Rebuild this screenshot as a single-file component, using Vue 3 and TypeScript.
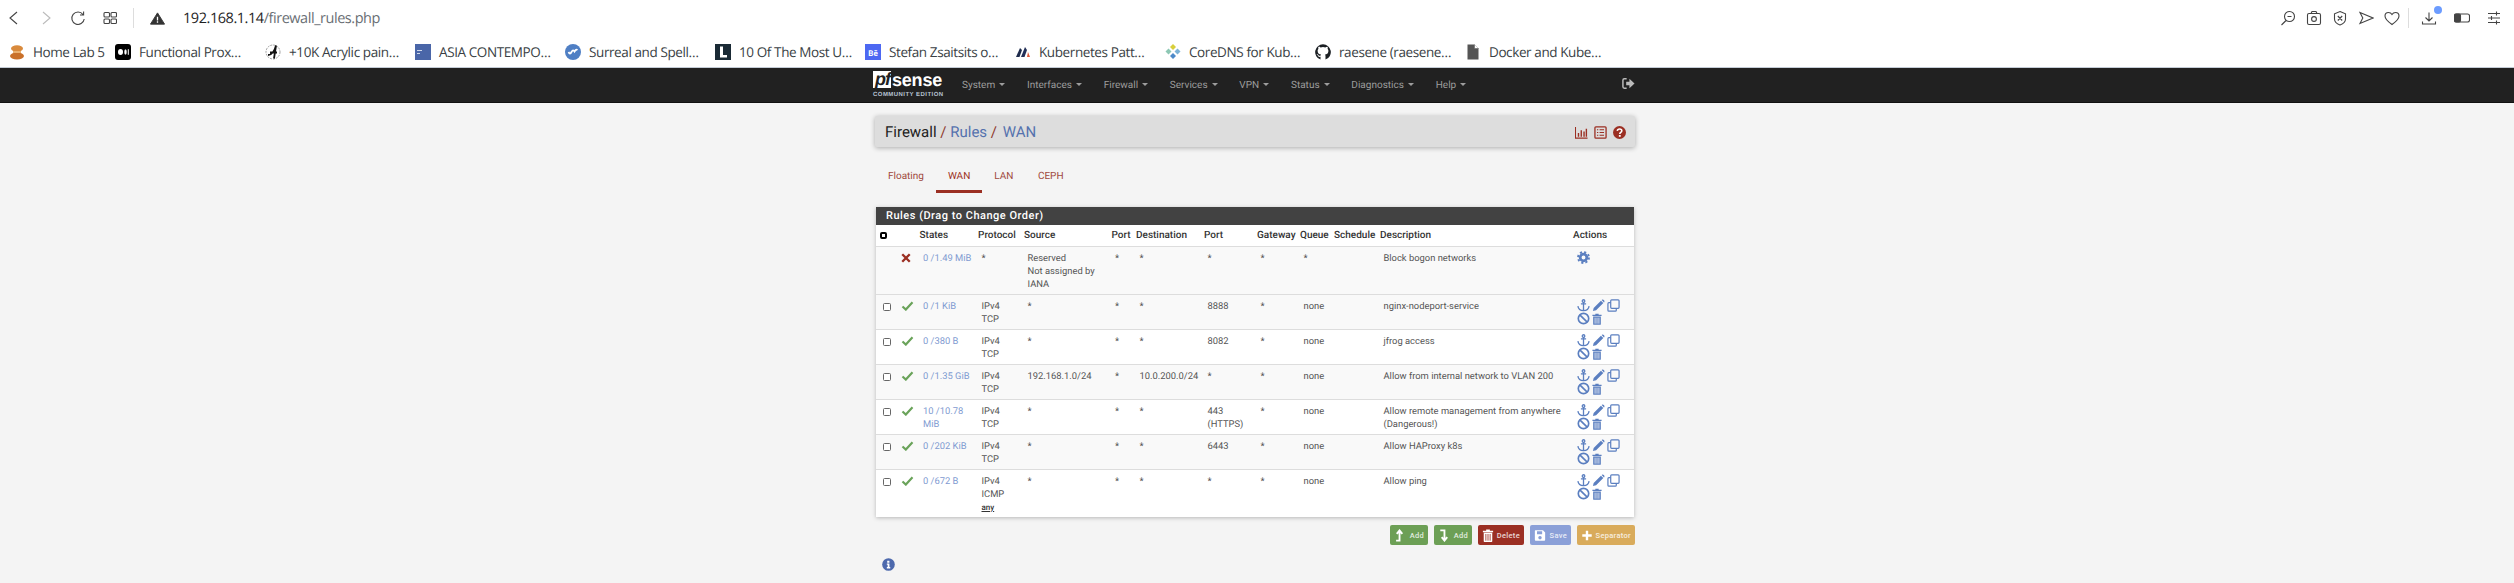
<template>
  <div class="page">
    <svg class="sprites" aria-hidden="true">
      <symbol id="i-check" viewBox="0 0 14 12">
        <path d="M1 6.5 L5 10.3 L13 1.6" fill="none" stroke="currentColor" stroke-width="2.6" />
      </symbol>
      <symbol id="i-times" viewBox="0 0 12 12">
        <path d="M1.5 1.5 L10.5 10.5 M10.5 1.5 L1.5 10.5" fill="none" stroke="currentColor" stroke-width="2.8" />
      </symbol>
      <symbol id="i-gear" viewBox="0 0 14 14">
        <circle cx="7" cy="7" r="3.6" fill="none" stroke="currentColor" stroke-width="3" />
        <circle cx="7" cy="7" r="5.9" fill="none" stroke="currentColor" stroke-width="2" stroke-dasharray="2.3 2.33" />
      </symbol>
      <symbol id="i-anchor" viewBox="0 0 14 14">
        <g fill="none" stroke="currentColor" stroke-width="1.4">
          <circle cx="7" cy="2.2" r="1.4" />
          <path d="M7 3.6 V12.6 M4.2 5.3 H9.8 M1 7.6 C1.4 10.8 4 12.4 7 12.6 C10 12.4 12.6 10.8 13 7.6" />
        </g>
      </symbol>
      <symbol id="i-pencil" viewBox="0 0 14 14">
        <path d="M1 13 L1.8 9.6 L9.6 1.8 L12.2 4.4 L4.4 12.2 Z M10.4 1 L11.2 0.6 Q12.2 0.5 13.2 1.6 Q13.7 2.4 13.2 3.4 L12.9 3.7 Z" fill="currentColor" />
      </symbol>
      <symbol id="i-copy" viewBox="0 0 14 14">
        <g fill="none" stroke="currentColor" stroke-width="1.3">
          <rect x="4" y="1" width="9" height="9" rx="1" />
          <path d="M4 4 H2 Q1 4 1 5 V12 Q1 13 2 13 H9 Q10 13 10 12 V10" />
        </g>
      </symbol>
      <symbol id="i-ban" viewBox="0 0 14 14">
        <g fill="none" stroke="currentColor" stroke-width="1.8">
          <circle cx="7" cy="7" r="5.6" />
          <path d="M3 3 L11 11" />
        </g>
      </symbol>
      <symbol id="i-trash" viewBox="0 0 12 14">
        <path d="M0.5 2 H4 V0.6 H8 V2 H11.5 V3.4 H0.5 Z M1.4 4 H10.6 V13.2 Q10.6 14 9.8 14 H2.2 Q1.4 14 1.4 13.2 Z" fill="currentColor" />
        <path d="M3.7 5.4 V12.6 M6 5.4 V12.6 M8.3 5.4 V12.6" style="stroke: var(--slit, #fff)" stroke-width="0.9" />
      </symbol>
      <symbol id="i-save" viewBox="0 0 14 14">
        <path fill-rule="evenodd" d="M1.5 1 H10.5 L13 3.5 V12 Q13 13 12 13 H2 Q1 13 1 12 V1.5 Z M3.5 2 V5.5 H9.5 V2 Z M7 7.5 A2 2 0 1 0 7.01 7.5 Z" fill="currentColor" />
      </symbol>
      <symbol id="i-plus" viewBox="0 0 14 14">
        <path d="M7 1.5 V12.5 M1.5 7 H12.5" stroke="currentColor" stroke-width="2.8" />
      </symbol>
      <symbol id="i-up" viewBox="0 0 10 14">
        <path d="M4.5 13.5 V2.5 M1.5 5.2 L4.5 1.5 L7.5 5.2 M4.5 12.5 H0.8" fill="none" stroke="currentColor" stroke-width="2" />
      </symbol>
      <symbol id="i-down" viewBox="0 0 10 14">
        <path d="M5.5 0.5 V11.5 M2.5 8.8 L5.5 12.5 L8.5 8.8 M5.5 1.5 H1" fill="none" stroke="currentColor" stroke-width="2" />
      </symbol>
    </svg>

    <header class="browser">
      <div class="toolbar">
        <div class="tool-left">
          <svg class="tb-icon" viewBox="0 0 16 16"><path d="M12 2 L5 8 L12 14" /></svg>
          <svg class="tb-icon faded" viewBox="0 0 16 16"><path d="M6 2 L13 8 L6 14" /></svg>
          <svg class="tb-icon" viewBox="0 0 16 16"><path d="M14 4.5 A6.2 6.2 0 1 0 15.2 9 M14.6 1.4 V5 H11" /></svg>
          <svg class="tb-icon" viewBox="0 0 16 16">
            <rect x="3" y="2.5" width="5.5" height="4.5" rx="1" /><rect x="10" y="2.5" width="5.5" height="4.5" rx="1" />
            <rect x="3" y="9" width="5.5" height="4.5" rx="1" /><rect x="10" y="9" width="5.5" height="4.5" rx="1" />
          </svg>
          <span class="tb-sep"></span>
          <svg class="warn" viewBox="0 0 16 16">
            <path d="M8 2 L15.5 14 H0.5 Z" fill="#333" stroke="#333" stroke-linejoin="round" />
            <path d="M8 6 V10 M8 11 V12.5" stroke="#fff" stroke-width="1.4" />
          </svg>
          <span class="url"><b>192.168.1.14</b>/firewall_rules.php</span>
        </div>
        <div class="tool-right">
          <svg class="tb-icon" viewBox="0 0 16 16"><circle cx="9.5" cy="6.5" r="5" /><path d="M7.5 6.5 H11.5 M6 10.5 L1.5 15" /></svg>
          <svg class="tb-icon" viewBox="0 0 16 16"><rect x="1.5" y="3.5" width="13" height="11" rx="1.5" /><path d="M5 3.5 L6 1.5 H10 L11 3.5" /><circle cx="8" cy="9" r="2.4" /></svg>
          <svg class="tb-icon" viewBox="0 0 16 16"><path d="M8 1.5 L13.5 3.8 V9 Q13.5 13 8 15 Q2.5 13 2.5 9 V3.8 Z M5.8 6 L10.2 10.5 M10.2 6 L5.8 10.5" /></svg>
          <svg class="tb-icon" viewBox="0 0 16 16"><path d="M2 2.5 L15 8 L2 13.5 L4.8 8 Z" /></svg>
          <svg class="tb-icon" viewBox="0 0 16 16"><path d="M8 14.5 C3 11 1 8.8 1 6 C1 3.8 2.6 2.5 4.5 2.5 C6 2.5 7.3 3.3 8 4.5 C8.7 3.3 10 2.5 11.5 2.5 C13.4 2.5 15 3.8 15 6 C15 8.8 13 11 8 14.5 Z" /></svg>
          <span class="tb-sep right"></span>
          <span class="dl">
            <svg class="tb-icon" viewBox="0 0 16 16"><path d="M8 2.5 V11 M4.5 7.5 L8 11 L11.5 7.5 M1.5 11.5 V14 H14.5 V11.5" /></svg>
            <i class="dot"></i>
          </span>
          <svg class="tb-icon side" viewBox="0 0 16 16"><rect x="0.5" y="4" width="15" height="8" rx="2" /><rect x="0.5" y="4" width="6" height="8" rx="1.5" fill="#444" /></svg>
          <svg class="tb-icon" viewBox="0 0 16 16"><path d="M2 3.5 H14 M2 8 H14 M2 12.5 H14 M10.5 1.5 V5.5 M5.5 6 V10 M10.5 10.5 V14.5" /></svg>
        </div>
      </div>
      <div class="bookmarks">
        <div v-for="b in bookmarks" :key="b.label" class="bookmark" :class="{ first: b.icon === 'homelab' }">
          <svg class="fav" viewBox="0 0 16 16">
            <g v-if="b.icon === 'homelab'">
              <ellipse cx="8" cy="4.5" rx="6" ry="3.2" fill="#d98a3d" />
              <ellipse cx="8" cy="12" rx="7" ry="3.5" fill="#c9702a" />
              <rect x="4" y="7" width="8" height="2" fill="#e9b070" />
            </g>
            <g v-else-if="b.icon === 'medium'">
              <rect width="16" height="16" rx="3" fill="#000" />
              <ellipse cx="5.5" cy="8" rx="2.5" ry="3" fill="#fff" /><ellipse cx="10.5" cy="8" rx="1.2" ry="2.8" fill="#fff" /><rect x="12.8" y="5.2" width="1" height="5.6" fill="#fff" />
            </g>
            <g v-else-if="b.icon === 'acrylic'">
              <circle cx="8" cy="8" r="7" fill="#fff" stroke="#777" stroke-width="0.7" stroke-dasharray="2 1" />
              <path d="M3 11 C7 11 10 6 11 1.5 L9 14.5 M5 8.5 H12" fill="none" stroke="#111" stroke-width="1.8" />
            </g>
            <g v-else-if="b.icon === 'asia'">
              <rect width="16" height="16" fill="#4a66a8" />
              <rect x="2" y="6" width="5" height="1" fill="#cfd8ea" /><rect x="2" y="9" width="3" height="1" fill="#cfd8ea" />
            </g>
            <g v-else-if="b.icon === 'surreal'">
              <circle cx="8" cy="8" r="8" fill="#4f7fc4" />
              <path d="M3.5 8 Q5 11 6.5 8 T9.5 7.5 Q11 5 12.5 6" fill="none" stroke="#fff" stroke-width="1.8" />
            </g>
            <g v-else-if="b.icon === 'ten'">
              <rect width="16" height="16" fill="#1a2a35" />
              <path d="M5 2.5 H8 V11 H12 V13.5 H5 Z" fill="#fff" />
            </g>
            <g v-else-if="b.icon === 'behance'">
              <rect width="16" height="16" fill="#4d68f2" />
              <text x="8" y="11.5" class="be" text-anchor="middle">Bē</text>
            </g>
            <g v-else-if="b.icon === 'k8s'">
              <path d="M1 13 L5 4 L7 6 L4.5 13 Z" fill="#1f2c4d" />
              <path d="M6 13 L10 3 L12 6 L9.5 13 Z" fill="#232f58" />
              <path d="M12 13 L13 8 L15 13 Z" fill="#e0583a" />
            </g>
            <g v-else-if="b.icon === 'coredns'">
              <path d="M8 0 L11 3 L8 6 L5 3 Z" fill="#d8cf3c" />
              <path d="M3.5 4.5 L6.5 7.5 L3.5 10.5 L0.5 7.5 Z" fill="#8dc7b4" />
              <path d="M12.5 4.5 L15.5 7.5 L12.5 10.5 L9.5 7.5 Z" fill="#7bb2d6" />
              <path d="M8 9 L11 12 L8 15 L5 12 Z" fill="#4d8ac9" />
            </g>
            <g v-else-if="b.icon === 'github'">
              <path d="M8 0.3 A7.8 7.8 0 0 0 5.5 15.5 V12.8 C3.3 13.3 2.9 11.8 2.9 11.8 C2.5 10.8 2 10.6 2 10.6 C1.3 10.1 2.1 10.1 2.1 10.1 C2.9 10.2 3.3 10.9 3.3 10.9 C4 12.1 5.1 11.8 5.6 11.6 C5.7 11 5.9 10.7 6.1 10.5 C4.4 10.3 2.6 9.6 2.6 6.7 C2.6 5.9 2.9 5.2 3.4 4.7 C3.3 4.5 3 3.7 3.5 2.7 C3.5 2.7 4.2 2.5 5.6 3.4 A7.6 7.6 0 0 1 10.4 3.4 C11.8 2.5 12.5 2.7 12.5 2.7 C13 3.7 12.7 4.5 12.6 4.7 C13.1 5.2 13.4 5.9 13.4 6.7 C13.4 9.6 11.6 10.3 9.9 10.5 C10.2 10.8 10.5 11.3 10.5 12 V15.5 A7.8 7.8 0 0 0 8 0.3 Z" fill="#1b1f23" />
            </g>
            <g v-else>
              <path d="M2.5 0.5 H9.5 L13.5 4.5 V15.5 H2.5 Z" fill="#555" />
              <path d="M9.5 0.5 V4.5 H13.5" fill="#fff" stroke="#555" stroke-width="0.5" />
            </g>
          </svg>
          <span class="bm-label">{{ b.label }}</span>
        </div>
      </div>
    </header>

    <nav class="topnav">
      <div class="logo">
        <div class="logo-top"><span class="logo-pf">pf</span><span class="logo-sense">sense</span></div>
        <div class="logo-sub">COMMUNITY EDITION</div>
      </div>
      <ul class="menu">
        <li v-for="m in menus" :key="m">{{ m }}<i class="caret"></i></li>
      </ul>
      <svg class="logout" viewBox="0 0 14 14">
        <path d="M5 2 H2.5 Q1 2 1 3.5 V10.5 Q1 12 2.5 12 H5" fill="none" stroke="currentColor" stroke-width="1.6" />
        <path d="M4.5 5 H8 V1.8 L13.5 7 L8 12.2 V9 H4.5 Z" fill="currentColor" />
      </svg>
    </nav>

    <main class="content">
      <div class="crumbs">
        <h1>Firewall <em>/</em> <a>Rules</a> <em class="wide">/</em> <a>WAN</a></h1>
        <div class="crumb-icons">
          <svg viewBox="0 0 14 14"><path d="M0.5 1 V13 H13.5" fill="none" stroke="currentColor" stroke-width="1.2" /><path d="M3 7.5 H4.5 V11.5 H3 Z M6 4.5 H7.5 V11.5 H6 Z M9 6 H10.5 V11.5 H9 Z M11.5 3 H13 V11.5 H11.5 Z" fill="currentColor" /></svg>
          <svg viewBox="0 0 14 14"><rect x="1" y="1" width="12" height="12" rx="1" fill="none" stroke="currentColor" stroke-width="1.4" /><path d="M3.2 4 H4.6 M6 4 H10.8 M3.2 7 H4.6 M6 7 H10.8 M3.2 10 H4.6 M6 10 H10.8" stroke="currentColor" stroke-width="1.2" /></svg>
          <svg viewBox="0 0 14 14"><circle cx="7" cy="7" r="7" fill="currentColor" /><path d="M4.6 5.3 C4.8 3.8 5.8 3.2 7.1 3.2 C8.5 3.2 9.5 4 9.5 5.2 C9.5 6.9 7.3 6.9 7.3 8.6" fill="none" stroke="#fff" stroke-width="1.7" /><rect x="6.3" y="9.7" width="2" height="1.9" fill="#fff" /></svg>
        </div>
      </div>

      <ul class="tabs">
        <li v-for="t in tabs" :key="t" :class="{ active: t === 'WAN' }">{{ t }}</li>
      </ul>

      <section class="panel">
        <h2>Rules (Drag to Change Order)</h2>
        <table>
          <colgroup>
            <col v-for="(w, i) in colWidths" :key="i" :style="{ width: w + 'px' }" />
          </colgroup>
          <thead>
            <tr>
              <th><span class="head-check"></span></th>
              <th></th>
              <th>States</th>
              <th>Protocol</th>
              <th>Source</th>
              <th>Port</th>
              <th>Destination</th>
              <th>Port</th>
              <th>Gateway</th>
              <th>Queue</th>
              <th>Schedule</th>
              <th>Description</th>
              <th>Actions</th>
            </tr>
          </thead>
          <tbody>
            <tr v-for="r in rules" :key="r.desc" :class="{ shaded: r.shaded }">
              <td><span v-if="!r.blocked" class="check"></span></td>
              <td class="status">
                <svg v-if="r.blocked" class="st-x"><use href="#i-times" /></svg>
                <svg v-else class="st-ok"><use href="#i-check" /></svg>
              </td>
              <td class="link">{{ r.states }}</td>
              <td>
                <template v-for="(p, i) in r.proto" :key="p">
                  <br v-if="i" />{{ p }}
                </template>
                <template v-if="r.any"><abbr class="any">any</abbr></template>
              </td>
              <td>
                <template v-for="(s, i) in r.source" :key="s">
                  <br v-if="i" />{{ s }}
                </template>
              </td>
              <td>*</td>
              <td>{{ r.dest }}</td>
              <td>{{ r.port }}</td>
              <td>*</td>
              <td>{{ r.queue }}</td>
              <td></td>
              <td>{{ r.desc }}</td>
              <td class="actions">
                <svg v-if="r.blocked" class="gear"><use href="#i-gear" /></svg>
                <template v-else>
                  <div class="act-row">
                    <svg class="a-anchor"><use href="#i-anchor" /></svg>
                    <svg class="a-pencil"><use href="#i-pencil" /></svg>
                    <svg class="a-copy"><use href="#i-copy" /></svg>
                  </div>
                  <div class="act-row">
                    <svg class="a-ban"><use href="#i-ban" /></svg>
                    <svg class="a-trash"><use href="#i-trash" /></svg>
                  </div>
                </template>
              </td>
            </tr>
          </tbody>
        </table>
      </section>

      <div class="buttons">
        <button v-for="b in buttons" :key="b.icon" :class="b.cls">
          <svg :class="'btn-' + b.icon"><use :href="'#i-' + b.icon" /></svg>
          <span>{{ b.label }}</span>
        </button>
      </div>

      <svg class="info" viewBox="0 0 14 14">
        <circle cx="7" cy="7" r="6.8" fill="#4d69ad" />
        <path d="M5.6 3 H8 V5 H5.6 Z M5.2 6 H8 V9.8 H8.9 V11.2 H5.2 V9.8 H6.1 V7.4 H5.2 Z" fill="#fff" />
      </svg>
    </main>
  </div>
</template>

<script setup lang="ts">
interface Rule {
  blocked?: boolean
  shaded?: boolean
  any?: boolean
  states: string
  proto: string[]
  source: string[]
  dest: string
  port: string
  queue: string
  desc: string
}

const bookmarks = [
  { icon: 'homelab', label: 'Home Lab 5' },
  { icon: 'medium', label: 'Functional Prox…' },
  { icon: 'acrylic', label: '+10K Acrylic pain…' },
  { icon: 'asia', label: 'ASIA CONTEMPO…' },
  { icon: 'surreal', label: 'Surreal and Spell…' },
  { icon: 'ten', label: '10 Of The Most U…' },
  { icon: 'behance', label: 'Stefan Zsaitsits o…' },
  { icon: 'k8s', label: 'Kubernetes Patt…' },
  { icon: 'coredns', label: 'CoreDNS for Kub…' },
  { icon: 'github', label: 'raesene (raesene…' },
  { icon: 'doc', label: 'Docker and Kube…' },
]

const menus = ['System', 'Interfaces', 'Firewall', 'Services', 'VPN', 'Status', 'Diagnostics', 'Help']
const tabs = ['Floating', 'WAN', 'LAN', 'CEPH']
const colWidths = [20, 20, 58.5, 46, 87.5, 24.5, 68, 53, 43, 34, 46, 193, 64.5]

const v4tcp = ['IPv4', 'TCP']

const rules: Rule[] = [
  { blocked: true, shaded: true, states: '0 /1.49 MiB', proto: ['*'], source: ['Reserved', 'Not assigned by IANA'], dest: '*', port: '*', queue: '*', desc: 'Block bogon networks' },
  { shaded: true, states: '0 /1 KiB', proto: v4tcp, source: ['*'], dest: '*', port: '8888', queue: 'none', desc: 'nginx-nodeport-service' },
  { states: '0 /380 B', proto: v4tcp, source: ['*'], dest: '*', port: '8082', queue: 'none', desc: 'jfrog access' },
  { shaded: true, states: '0 /1.35 GiB', proto: v4tcp, source: ['192.168.1.0/24'], dest: '10.0.200.0/24', port: '*', queue: 'none', desc: 'Allow from internal network to VLAN 200' },
  { states: '10 /10.78 MiB', proto: v4tcp, source: ['*'], dest: '*', port: '443 (HTTPS)', queue: 'none', desc: 'Allow remote management from anywhere (Dangerous!)' },
  { shaded: true, states: '0 /202 KiB', proto: v4tcp, source: ['*'], dest: '*', port: '6443', queue: 'none', desc: 'Allow HAProxy k8s' },
  { any: true, states: '0 /672 B', proto: ['IPv4', 'ICMP'], source: ['*'], dest: '*', port: '*', queue: 'none', desc: 'Allow ping' },
]

const buttons = [
  { icon: 'up', label: 'Add', cls: 'green' },
  { icon: 'down', label: 'Add', cls: 'green' },
  { icon: 'trash', label: 'Delete', cls: 'red' },
  { icon: 'save', label: 'Save', cls: 'blue' },
  { icon: 'plus', label: 'Separator', cls: 'yellow' },
]
</script>

<style>
html,
body {
  margin: 0;
  background: #f4f4f4;
}
</style>

<style scoped>
.page {
  height: 583px;
  overflow: hidden;
  font-family: Roboto, "Liberation Sans", sans-serif;
  font-size: 10px;
  color: #555;
  text-rendering: geometricPrecision;
}

.sprites {
  position: absolute;
  width: 0;
  height: 0;
}

.browser {
  background: #fff;
  height: 68px;
  box-sizing: border-box;
  border-bottom: 1px solid #c4ccd6;
}

.toolbar {
  height: 36px;
  display: flex;
  justify-content: space-between;
  align-items: center;
}

.tool-left,
.tool-right {
  display: flex;
  align-items: center;
}

.tool-left {
  padding-left: 5px;
  gap: 16px;
}

.tool-right {
  padding-right: 12px;
  gap: 10px;
}

.tb-icon {
  width: 16px;
  height: 16px;
  fill: none;
  stroke: #444;
  stroke-width: 1.1;
}

.tb-icon.faded {
  stroke: #bbb;
}

.tb-sep {
  width: 1px;
  height: 20px;
  background: #ddd;
}

.tb-sep.right {
  margin: 0 2px 0 -2px;
}

.warn {
  width: 15px;
  height: 15px;
}

.url {
  font-size: 14.5px;
  margin-left: 2px;
  color: #6a6f75;
  font-family: "Open Sans", Roboto, sans-serif;
  letter-spacing: -0.45px;
}

.url b {
  font-weight: 400;
  color: #1f1f1f;
}

.dl {
  position: relative;
  display: flex;
  margin-right: 7px;
}

.dot {
  position: absolute;
  top: -4px;
  right: -5px;
  width: 8px;
  height: 8px;
  border-radius: 50%;
  background: #6c9cff;
}

.side {
  margin-right: 6px;
}

.bookmarks {
  height: 31px;
  display: flex;
  align-items: center;
  padding-left: 9px;
}

.bookmark {
  width: 150px;
  display: flex;
  align-items: center;
  gap: 8px;
  flex: none;
}

.bookmark.first {
  width: 106px;
}

.fav {
  width: 16px;
  height: 16px;
  flex: none;
}

.be {
  font: 700 8px Roboto, sans-serif;
  fill: #fff;
}

.bm-label {
  font-size: 13.5px;
  color: #3a3f45;
  white-space: nowrap;
  font-family: "Open Sans", Roboto, sans-serif;
  letter-spacing: -0.4px;
}

.topnav {
  height: 34px;
  background: #212121;
  display: flex;
  align-items: center;
  padding: 0 879px 0 873px;
  box-shadow: 0 1px 0 #111;
}

.logo {
  width: 70px;
  margin-top: -1px;
}

.logo-top {
  display: flex;
  align-items: center;
  height: 18px;
}

.logo-pf {
  background: #fff;
  color: #212121;
  font: italic 700 18px/16px "Liberation Sans", sans-serif;
  height: 17px;
  width: 18px;
  box-sizing: border-box;
  padding-left: 2px;
  letter-spacing: -1px;
}

.logo-sense {
  color: #fff;
  font: 700 18px/18px "Liberation Sans", sans-serif;
  margin-left: 1px;
  margin-top: 2px;
  letter-spacing: -0.2px;
}

.logo-sub {
  color: #b8c4d4;
  font: 700 6px/8px "Liberation Sans", sans-serif;
  letter-spacing: 0.45px;
  white-space: nowrap;
  margin-top: 3px;
}

.menu {
  display: flex;
  gap: 21.8px;
  list-style: none;
  margin: 0 0 0 19px;
  padding: 0;
  color: #9d9d9d;
  font-size: 10px;
}

.caret {
  display: inline-block;
  margin-left: 4px;
  vertical-align: middle;
  border-top: 3px solid #9d9d9d;
  border-left: 3px solid transparent;
  border-right: 3px solid transparent;
}

.logout {
  margin: 0 0 3px auto;
  width: 13px;
  height: 13px;
  color: #bbb;
}

.content {
  margin-left: 875px;
  width: 760px;
  padding-top: 14px;
}

.crumbs {
  height: 31px;
  background: #ddd;
  display: flex;
  align-items: center;
  justify-content: space-between;
  padding: 0 9px 0 10px;
  box-shadow: 0 1px 5px rgba(0, 0, 0, 0.3);
  border-radius: 2px;
}

.crumbs h1 {
  margin: 0;
  font-size: 15px;
  font-weight: 400;
  color: #222;
}

.crumbs em {
  font-style: normal;
  color: #8e3a2e;
}

.crumbs em.wide {
  margin-right: 2px;
}

.crumbs a {
  color: #5572ae;
}

.crumb-icons {
  display: flex;
  gap: 6px;
  color: #9b2f23;
  margin-top: 2px;
}

.crumb-icons svg {
  width: 13px;
  height: 13px;
}

.tabs {
  display: flex;
  list-style: none;
  margin: 18px 0 0 1px;
  padding: 0;
  height: 28px;
  color: #a0493d;
  font-size: 10px;
}

.tabs li {
  padding: 6px 12px 0;
  height: 19px;
}

.tabs li:nth-child(n + 3) {
  padding-right: 12.5px;
}

.tabs li.active {
  border-bottom: 3px solid #9b2f23;
  color: #9b2f23;
}

.panel {
  margin: 14px 0 0 1px;
  width: 758px;
  background: #fff;
  box-shadow: 0 1px 4px rgba(0, 0, 0, 0.25);
}

.panel h2 {
  margin: 0;
  height: 18px;
  background: #424242;
  color: #fff;
  font-size: 11px;
  font-weight: 500;
  line-height: 18px;
  padding-left: 10px;
  letter-spacing: 0.5px;
}

table {
  table-layout: fixed;
  border-collapse: collapse;
  width: 758px;
}

th {
  text-align: left;
  font-weight: 500;
  color: #333;
  height: 21px;
  padding: 0 0 0 3.5px;
  border-bottom: 1px solid #ddd;
  white-space: nowrap;
}

td {
  vertical-align: top;
  padding: 5px 0 3px 7px;
  font-size: 9.4px;
  line-height: 13px;
  border-bottom: 1px solid #ddd;
}

tbody tr:last-child td {
  border-bottom: 0;
}

tr.shaded td {
  background: #f9f9f9;
}

.head-check {
  display: block;
  width: 3px;
  height: 3px;
  border: 2px solid #000;
  border-radius: 2px;
  margin-top: -1px;
}

.check {
  display: block;
  width: 6px;
  height: 6px;
  border: 1px solid #666;
  border-radius: 1.5px;
  background: #fff;
  margin-top: 3px;
}

td.status {
  padding-left: 4.5px;
}

.st-ok {
  display: block;
  width: 13px;
  height: 10px;
  color: #6aa35a;
  margin-top: 1px;
}

.st-x {
  display: block;
  width: 10px;
  height: 10px;
  color: #9b2f23;
  margin: 1px 0 0 0.5px;
}

.link {
  color: #7f9bd1;
}

.any {
  font-size: 8px;
  font-weight: 500;
  color: #333;
  text-decoration: underline;
  display: block;
}

.actions {
  color: #5b7fc0;
  padding-left: 7.5px;
  padding-top: 4px;
  padding-bottom: 0;
}

.gear {
  display: block;
  width: 13px;
  height: 13px;
}

.act-row {
  display: flex;
  align-items: center;
  height: 13px;
  gap: 2px;
}

.act-row svg {
  width: 13px;
  height: 13px;
}

.actions .a-trash {
  width: 10px;
  height: 12px;
}

.buttons {
  display: flex;
  justify-content: flex-end;
  gap: 6px;
  margin-top: 8px;
}

.buttons button {
  height: 20px;
  border: 0;
  border-radius: 2px;
  color: #fff;
  font: 500 7.5px Roboto, sans-serif;
  letter-spacing: 0.3px;
  display: flex;
  align-items: center;
  justify-content: space-between;
  padding: 0 4px;
}

.buttons span {
  opacity: 0.8;
}

.buttons svg {
  width: 12px;
  height: 13px;
  flex: none;
}

.green {
  background: #6c9f55;
  width: 38px;
}

.red {
  background: #9b2f23;
  width: 46px;
  --slit: #9b2f23;
}

.blue {
  background: #8ba0d8;
  width: 41px;
}

.yellow {
  background: #d9ab5b;
  width: 58px;
}

.info {
  display: block;
  width: 13px;
  height: 13px;
  margin: 12.5px 0 0 7px;
}
</style>
